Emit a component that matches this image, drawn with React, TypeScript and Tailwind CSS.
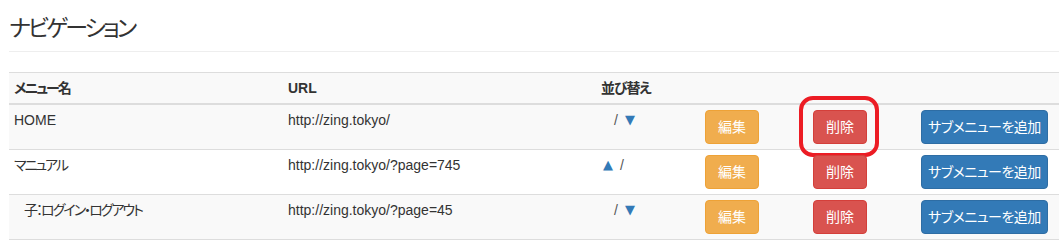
import React from 'react';

type Row = {
    name: string;
    url: string;
    up: boolean;
    down: boolean;
    child?: boolean;
    marked?: boolean;
};

const rows: Row[] = [
    { name: 'HOME', url: 'http://zing.tokyo/', up: false, down: true, marked: true },
    { name: 'マニュアル', url: 'http://zing.tokyo/?page=745', up: true, down: false },
    { name: '子：ログイン・ログアウト', url: 'http://zing.tokyo/?page=45', up: false, down: true, child: true },
];

const font = "font-['Liberation_Sans','Noto_Sans_CJK_JP',sans-serif] [font-feature-settings:'palt']";

const Btn: React.FC<{ color: 'warning' | 'danger' | 'primary'; wide?: boolean; children: React.ReactNode }> = ({ color, wide, children }) => {
    const tone =
        color === 'warning'
            ? 'bg-[#f0ad4e] border-[#eea236]'
            : color === 'danger'
                ? 'bg-[#d9534f] border-[#d43f3a]'
                : 'bg-[#337ab7] border-[#2e6da4]';
    return (
        <button
            className={`${tone} ${wide ? 'w-[127px] tracking-[-0.5px]' : 'w-[54px]'} h-[34px] border rounded-[4px] text-white text-[14px] leading-[20px] flex items-center justify-center whitespace-nowrap`}
        >
            {children}
        </button>
    );
};

export default function App() {
    return (
        <div className={`${font} bg-white text-[#333] text-[14px] leading-[20px] pl-[9px] w-[1059px] h-[243px] overflow-hidden`}>
            <div className="pt-[15px] pb-[10px] border-b border-[#eee]">
                <h1 className="text-[23px] leading-[26px] font-normal tracking-[-3px]">ナビゲーション</h1>
            </div>

            <table className="mt-[20px] w-[1050px] table-fixed border-collapse border-t border-[#ddd]">
                <colgroup>
                    <col className="w-[274px]" />
                    <col className="w-[313px]" />
                    <col className="w-[104px]" />
                    <col className="w-[108px]" />
                    <col className="w-[108px]" />
                    <col className="w-[143px]" />
                </colgroup>
                <tbody>
                    <tr className="bg-[#f9f9f9] border-b-2 border-[#ddd]">
                        <th className="text-left font-bold p-[5px] h-[30px] align-top tracking-[-2px]">メニュー名</th>
                        <th className="text-left font-bold p-[5px] align-top">URL</th>
                        <th className="text-left font-bold p-[5px] align-top tracking-[-1px]">並び替え</th>
                        <th className="p-[5px]"></th>
                        <th className="p-[5px]"></th>
                        <th className="p-[5px]"></th>
                    </tr>
                    {rows.map((r, i) => (
                        <tr key={r.name} className={`${i % 2 === 0 ? 'bg-[#f9f9f9]' : 'bg-white'} border-b border-[#ddd]`}>
                            <td className="p-[5px] align-top h-[44px]">
                                <span className={`${r.child ? 'pl-[10px]' : ''} ${r.name === 'HOME' ? '' : 'tracking-[-2px]'}`}>{r.name}</span>
                            </td>
                            <td className="p-[5px] align-top">{r.url}</td>
                            <td className="p-[5px] pl-[7px] align-top">
                                <span className="flex gap-[7px] font-['DejaVu_Sans',sans-serif] text-[13px]">
                                    <span className={r.up ? 'text-[#337ab7]' : 'invisible w-[4px] overflow-hidden'}>{r.up ? '▲' : ''}</span>
                                    <span className="text-[#555] font-['Liberation_Sans',sans-serif] text-[14px]">/</span>
                                    {r.down && <span className="text-[#337ab7]">▼</span>}
                                </span>
                            </td>
                            <td className="p-[5px] align-top">
                                <Btn color="warning">編集</Btn>
                            </td>
                            <td className="p-[5px] align-top relative">
                                <Btn color="danger">削除</Btn>
                                {r.marked && (
                                    <div className="absolute left-[-9px] top-[-9px] w-[80px] h-[61px] border-[4px] border-[#ec1c24] rounded-[14px] pointer-events-none" />
                                )}
                            </td>
                            <td className="p-[5px] align-top">
                                <Btn color="primary" wide>サブメニューを追加</Btn>
                            </td>
                        </tr>
                    ))}
                </tbody>
            </table>
        </div>
    );
}
